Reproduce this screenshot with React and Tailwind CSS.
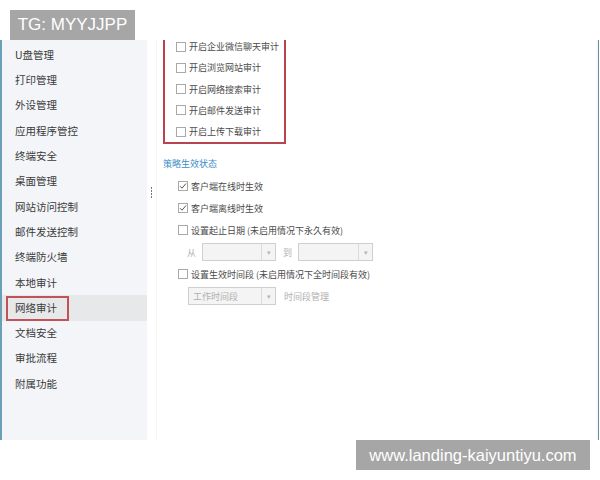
import React from 'react';

const menu = [
  'U盘管理', '打印管理', '外设管理', '应用程序管控', '终端安全', '桌面管理',
  '网站访问控制', '邮件发送控制', '终端防火墙', '本地审计', '网络审计',
  '文档安全', '审批流程', '附属功能',
];

const audits = ['开启企业微信聊天审计', '开启浏览网站审计', '开启网络搜索审计', '开启邮件发送审计', '开启上传下载审计'];

const cjk = { fontFamily: '"Noto Sans CJK SC", "Noto Sans", sans-serif' };
const latin = { fontFamily: '"Liberation Sans", Arial, sans-serif' };

const Box = ({ checked }) => (
  <span className="w-[10px] h-[10px] border border-[#a9a9a9] bg-white flex items-center justify-center shrink-0">
    {checked && (
      <svg width="8" height="8" viewBox="0 0 8 8">
        <path d="M1 4.2 L3 6.2 L7 1.5" fill="none" stroke="#555" strokeWidth="1" />
      </svg>
    )}
  </span>
);

const Row = ({ checked, children, h = 'h-[22px]' }) => (
  <div className={`flex items-center gap-[3px] ${h}`}>
    <Box checked={checked} />
    <span className="text-[9px] text-[#4a4a4a] leading-none whitespace-nowrap">{children}</span>
  </div>
);

const Select = ({ w, label }) => (
  <div className={`flex h-[18px] border border-[#cfcfcf] bg-[#f4f4f4] ${w}`}>
    <span className="flex-1 text-[9px] text-[#b0b0b0] pl-[4px] flex items-center leading-none">{label}</span>
    <span className="w-[14px] border-l border-[#dcdcdc] flex items-center justify-center text-[7px] text-[#b5b5b5]">▾</span>
  </div>
);

export default function App() {
  return (
    <div className="w-[600px] h-[480px] bg-white relative overflow-hidden" style={cjk}>
      <div className="h-[40px]" />
      <div className="flex h-[400px]">
        {/* 左侧菜单 */}
        <div className="w-[147px] bg-[#f3f5f8] border-l-[2px] border-[#6b9fb8] pt-[2.5px]">
          {menu.map((m) => (
            <div
              key={m}
              className={`h-[25.3px] flex items-center ${m === '网络审计' ? 'bg-[#e7e8ea]' : ''}`}
            >
              <span
                className={`text-[10.5px] text-[#3a3a3a] leading-none ${
                  m === '网络审计'
                    ? 'ml-[4px] px-[7px] h-[25px] flex items-center border-2 border-[#c0525a] w-[63px]'
                    : 'ml-[13px]'
                }`}
              >
                {m}
              </span>
            </div>
          ))}
        </div>

        {/* 分隔拖动条 */}
        <div className="w-[10px] border-r border-[#f4f5f7] flex flex-col items-center pt-[147px] gap-[1.5px]">
          <span className="w-[1.5px] h-[1.5px] bg-[#777]" />
          <span className="w-[1.5px] h-[1.5px] bg-[#777]" />
          <span className="w-[1.5px] h-[1.5px] bg-[#777]" />
          <span className="w-[1.5px] h-[1.5px] bg-[#777]" />
        </div>

        {/* 内容 */}
        <div className="flex-1 pl-[6px] overflow-hidden">
          <div className="w-[123px] border-2 border-t-0 border-[#b8454e] pl-[11px] mt-[-4px]">
            {audits.map((a) => (
              <Row key={a} h="h-[21.25px]">{a}</Row>
            ))}
          </div>
          <div className="text-[9px] text-[#3a8dc6] mt-[12px] h-[14px] flex items-center">策略生效状态</div>
          <div className="pl-[15px] mt-[5px]">
            <Row checked>客户端在线时生效</Row>
            <Row checked>客户端离线时生效</Row>
            <Row>设置起止日期 (未启用情况下永久有效)</Row>
            <div className="flex items-center h-[22px] pl-[9px] gap-[6px]">
              <span className="text-[9px] text-[#b0b0b0]">从</span>
              <Select w="w-[74px]" />
              <span className="text-[9px] text-[#b0b0b0] ml-[1px]">到</span>
              <Select w="w-[75px]" />
            </div>
            <Row>设置生效时间段 (未启用情况下全时间段有效)</Row>
            <div className="flex items-center h-[22px] pl-[10px] gap-[8px]">
              <Select w="w-[88px]" label="工作时间段" />
              <span className="text-[9px] text-[#b0b0b0]">时间段管理</span>
            </div>
          </div>
        </div>
        <div className="w-[3px] bg-[#f6f8fb] border-r border-[#6f8d96]" />
        <div className="w-[1px]" />
      </div>

      {/* 水印 */}
      <div className="absolute left-[10px] top-[10px] w-[125px] h-[30px] bg-[#a6a6a6] flex items-center justify-center text-white text-[17px]" style={latin}>
        TG: MYYJJPP
      </div>
      <div className="absolute left-[356px] top-[440px] w-[234px] h-[30px] bg-[#a6a6a6] flex items-center justify-center text-white text-[16.5px]" style={latin}>
        www.landing-kaiyuntiyu.com
      </div>
    </div>
  );
}
